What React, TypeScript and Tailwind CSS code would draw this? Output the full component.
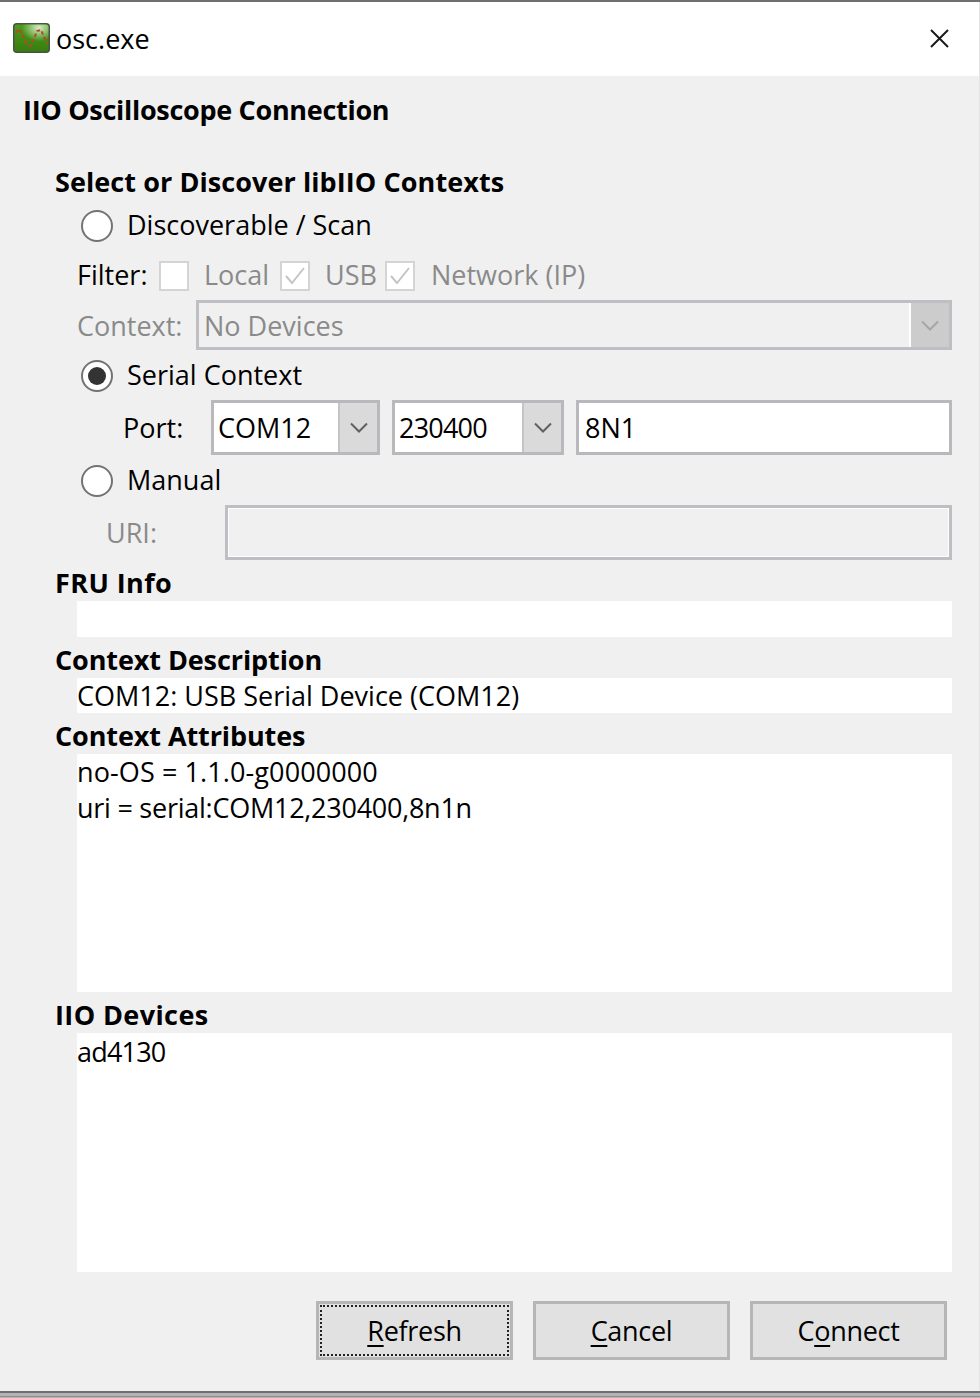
import type { ReactNode } from "react";

const font = "font-['Open_Sans','Noto_Sans',sans-serif]";

function Heading({ children, className = "tracking-[-0.1px]" }: { children: ReactNode; className?: string }) {
  return (
    <div className={`mt-[5px] flex h-[36px] items-center pl-[55px] text-[27px] font-bold text-black ${className}`}>
      {children}
    </div>
  );
}

function Radio({ checked, label }: { checked?: boolean; label: string }) {
  return (
    <div className="mt-[8px] flex h-[36px] items-center pl-[81px]">
      <span className="flex h-8 w-8 items-center justify-center rounded-full border-2 border-[#737373] bg-white">
        {checked && <span className="h-[18px] w-[18px] rounded-full bg-[#333]" />}
      </span>
      <span className="ml-[14px] mt-[-2px] text-[27px] text-black">{label}</span>
    </div>
  );
}

function Check({ checked }: { checked?: boolean }) {
  return (
    <span className="flex h-[30px] w-[30px] shrink-0 items-center justify-center border-2 border-[#d4d4d4] bg-white">
      {checked && (
        <svg width="22" height="22" viewBox="0 0 22 22" fill="none">
          <path d="M2 11 L8 18 L20 3" stroke="#c4c4c4" strokeWidth="2" />
        </svg>
      )}
    </span>
  );
}

function Chevron({ color }: { color: string }) {
  return (
    <svg width="18" height="11" viewBox="0 0 18 11" fill="none">
      <path d="M1 1.5 L9 9.5 L17 1.5" stroke={color} strokeWidth="2" />
    </svg>
  );
}

function Combo({ value, className, textClass = "" }: { value: string; className: string; textClass?: string }) {
  return (
    <div className={`flex h-[55px] items-stretch border-[3px] border-[#b9b9bd] bg-white ${className}`}>
      <span className={`flex flex-1 items-center pl-[4px] pt-[2px] text-[27px] text-black ${textClass}`}>{value}</span>
      <span className="flex w-[39px] items-center justify-center border-l-[2px] border-[#c4c4c8] bg-[#dadada]">
        <Chevron color="#606060" />
      </span>
    </div>
  );
}

function Box({ children, className }: { children?: ReactNode; className: string }) {
  return (
    <div className={`ml-[77px] mr-[27px] bg-white text-[27px] leading-[36px] text-black ${className}`}>
      {children}
    </div>
  );
}

function Btn({ label, hot, focus }: { label: string; hot: number; focus?: boolean }) {
  return (
    <button className="flex h-[59px] w-[197px] items-center justify-center border-[3px] border-[#b6b6b6] bg-[#e1e1e1] p-[1px] text-[27px] tracking-[-0.3px] text-black">
      <span className={`flex h-full w-full items-center justify-center pt-[2px] ${focus ? "border-2 border-dotted border-[#222]" : ""}`}>
        {label.slice(0, hot)}
        <span className="underline decoration-2 underline-offset-4">{label[hot]}</span>
        {label.slice(hot + 1)}
      </span>
    </button>
  );
}

function OscIcon() {
  return (
    <svg width="37" height="30" viewBox="0 0 37 30" className="mt-[-2px] shrink-0">
      <defs>
        <radialGradient id="gloss" cx="0.72" cy="0.12" r="0.5">
          <stop offset="0" stopColor="#d5ecc4" />
          <stop offset="1" stopColor="#d5ecc4" stopOpacity="0" />
        </radialGradient>
        <linearGradient id="body" x1="0" y1="0" x2="0" y2="1">
          <stop offset="0" stopColor="#4f9c1e" />
          <stop offset="1" stopColor="#367d0e" />
        </linearGradient>
      </defs>
      <rect x="0.75" y="0.75" width="35.5" height="28.5" rx="3" fill="url(#body)" stroke="#4a5244" strokeWidth="1.5" />
      <rect x="1.5" y="1.5" width="34" height="27" rx="2.5" fill="url(#gloss)" />
      <path
        d="M3 10 L6 6 L10 13 L13 20 L17 23 L21 16 L24 8 L28 7 L31 14 L35 21"
        stroke="#b8482c"
        strokeWidth="2"
        fill="none"
        strokeDasharray="3.5 2.5"
      />
    </svg>
  );
}

export default function App() {
  return (
    <div className={`flex h-[1398px] w-[980px] flex-col overflow-hidden bg-[#e4e4e4] ${font}`}>
      <div className="h-[2px] bg-[#6f6f6f]" />
      <div className="mr-[1px] flex h-[74px] items-center bg-white pl-[13px] pr-[30px]">
        <OscIcon />
        <span className="ml-[6px] flex-1 text-[27px] text-black">osc.exe</span>
        <svg width="19" height="19" viewBox="0 0 19 19" fill="none" className="mt-[-2px]">
          <path d="M1 1 L18 18 M18 1 L1 18" stroke="#1a1a1a" strokeWidth="2" />
        </svg>
      </div>
      <div className="mr-[1px] flex h-[1315px] flex-col bg-[#f0f0f0]">
        <div className="mt-[16px] flex h-[36px] items-center pl-[23px] text-[27px] font-bold tracking-[-0.3px] text-black">
          IIO Oscilloscope Connection
        </div>
        <div className="mt-[36px] flex h-[36px] items-center pl-[55px] text-[27px] font-bold tracking-[0.08px] text-black">
          Select or Discover libIIO Contexts
        </div>
        <Radio label="Discoverable / Scan" />
        <div className="mt-[14px] flex h-[36px] items-center pl-[77px] text-[27px] text-[#8a8a8a]">
          <span className="mt-[-1px] w-[82px] text-black">Filter:</span>
          <Check />
          <span className="ml-[15px] mt-[-1px] w-[76px]">Local</span>
          <Check checked />
          <span className="ml-[15px] mt-[-1px] w-[60px]">USB</span>
          <Check checked />
          <span className="ml-[16px] mt-[-1px]">Network (IP)</span>
        </div>
        <div className="mt-[6px] flex h-[50px] items-center pl-[77px] pr-[27px] text-[27px] text-[#8a8a8a]">
          <span className="w-[119px] pt-[2px]">Context:</span>
          <div className="flex h-full flex-1 items-stretch border-[3px] border-[#bfbfc3]">
            <span className="flex flex-1 items-center pl-[5px] pt-[2px]">No Devices</span>
            <span className="flex w-[40px] items-center justify-center border-l-[2px] border-white bg-[#cccccc]">
              <Chevron color="#a6a6a6" />
            </span>
          </div>
        </div>
        <Radio checked label="Serial Context" />
        <div className="mt-[6px] flex h-[55px] items-center gap-[12px] pl-[123px] pr-[27px] text-[27px] text-black">
          <span className="w-[76px] pt-[2px]">Port:</span>
          <Combo value="COM12" className="w-[169px]" />
          <Combo value="230400" className="w-[172px]" textClass="tracking-[-0.8px]" />
          <div className="flex h-[55px] flex-1 items-center border-[3px] border-[#b9b9bd] bg-white pl-[6px] pt-[2px]">8N1</div>
        </div>
        <Radio label="Manual" />
        <div className="mt-[6px] flex h-[55px] items-center pl-[106px] pr-[27px] text-[27px] text-[#8a8a8a]">
          <span className="w-[119px] pt-[2px]">URI:</span>
          <div className="h-full flex-1 border-[3px] border-[#bfbfc3] bg-[#f0f0f0] shadow-[inset_0_0_0_1px_#ffffff]" />
        </div>
        <Heading className="tracking-[0.4px]">FRU Info</Heading>
        <Box className="h-[36px]" />
        <Heading>Context Description</Heading>
        <Box className="h-[35px]">COM12: USB Serial Device (COM12)</Box>
        <Heading>Context Attributes</Heading>
        <Box className="h-[238px]">
          <div className="tracking-[0.1px]">no-OS = 1.1.0-g0000000</div>
          <div className="tracking-[-0.25px]">uri = serial:COM12,230400,8n1n</div>
        </Box>
        <Heading className="tracking-[0.4px]">IIO Devices</Heading>
        <Box className="h-[239px] pt-[1px] tracking-[-0.8px]">ad4130</Box>
        <div className="mt-[29px] flex gap-[20px] pl-[316px]">
          <Btn label="Refresh" hot={0} focus />
          <Btn label="Cancel" hot={0} />
          <Btn label="Connect" hot={1} />
        </div>
      </div>
      <div className="h-[2px] bg-[#6f6f6f]" />
      <div className="h-[3px] bg-[#b4b4b4]" />
      <div className="h-[1px] bg-[#8c8c8c]" />
      <div className="h-[1px] bg-[#b4b4b4]" />
    </div>
  );
}
